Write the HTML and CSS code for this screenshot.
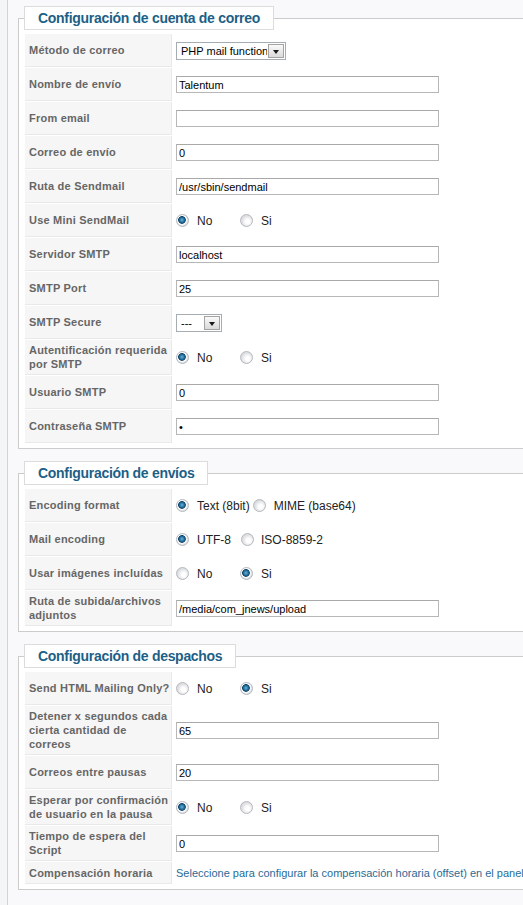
FILE: index.html
```html
<!DOCTYPE html>
<html lang="es">
<head>
    <meta charset="UTF-8">
    <meta name="viewport" content="width=device-width, initial-scale=1.0">
    <title>Configuración de correo</title>
    <link rel="stylesheet" href="styles.css">
</head>
<body>
    <div class="element-box">

        <!-- Cuenta de correo -->
        <fieldset class="adminform">
            <legend>Configuración de cuenta de correo</legend>
            <table class="admintable">
                <tr>
                    <td class="key">Método de correo</td>
                    <td>
                        <span class="select">
                            <select class="select-php"><option>PHP mail function</option></select>
                            <span class="select-btn"></span>
                        </span>
                    </td>
                </tr>
                <tr>
                    <td class="key">Nombre de envío</td>
                    <td><input class="inputbox" type="text" value="Talentum"></td>
                </tr>
                <tr>
                    <td class="key">From email</td>
                    <td><input class="inputbox" type="text" value=""></td>
                </tr>
                <tr>
                    <td class="key">Correo de envío</td>
                    <td><input class="inputbox" type="text" value="0"></td>
                </tr>
                <tr>
                    <td class="key">Ruta de Sendmail</td>
                    <td><input class="inputbox" type="text" value="/usr/sbin/sendmail"></td>
                </tr>
                <tr>
                    <td class="key">Use Mini SendMail</td>
                    <td>
                        <div class="radios">
                            <label class="opt opt-no"><input type="radio" name="minisend" checked> No</label>
                            <label class="opt"><input type="radio" name="minisend"> Si</label>
                        </div>
                    </td>
                </tr>
                <tr>
                    <td class="key">Servidor SMTP</td>
                    <td><input class="inputbox" type="text" value="localhost"></td>
                </tr>
                <tr>
                    <td class="key">SMTP Port</td>
                    <td><input class="inputbox" type="text" value="25"></td>
                </tr>
                <tr>
                    <td class="key">SMTP Secure</td>
                    <td>
                        <span class="select">
                            <select class="select-secure"><option>---</option></select>
                            <span class="select-btn"></span>
                        </span>
                    </td>
                </tr>
                <tr>
                    <td class="key">Autentificación requerida por SMTP</td>
                    <td>
                        <div class="radios">
                            <label class="opt opt-no"><input type="radio" name="smtpauth" checked> No</label>
                            <label class="opt"><input type="radio" name="smtpauth"> Si</label>
                        </div>
                    </td>
                </tr>
                <tr>
                    <td class="key">Usuario SMTP</td>
                    <td><input class="inputbox" type="text" value="0"></td>
                </tr>
                <tr>
                    <td class="key">Contraseña SMTP</td>
                    <td><input class="inputbox" type="password" value="x"></td>
                </tr>
            </table>
        </fieldset>

        <!-- Envíos -->
        <fieldset class="adminform">
            <legend>Configuración de envíos</legend>
            <table class="admintable">
                <tr>
                    <td class="key">Encoding format</td>
                    <td>
                        <div class="radios">
                            <label class="opt opt-tight"><input type="radio" name="encformat" checked> Text (8bit)</label>
                            <label class="opt"><input type="radio" name="encformat"> MIME (base64)</label>
                        </div>
                    </td>
                </tr>
                <tr>
                    <td class="key">Mail encoding</td>
                    <td>
                        <div class="radios">
                            <label class="opt opt-utf"><input type="radio" name="mailenc" checked> UTF-8</label>
                            <label class="opt opt-iso"><input type="radio" name="mailenc"> ISO-8859-2</label>
                        </div>
                    </td>
                </tr>
                <tr>
                    <td class="key">Usar imágenes incluídas</td>
                    <td>
                        <div class="radios">
                            <label class="opt opt-no"><input type="radio" name="embed"> No</label>
                            <label class="opt"><input type="radio" name="embed" checked> Si</label>
                        </div>
                    </td>
                </tr>
                <tr>
                    <td class="key">Ruta de subida/archivos adjuntos</td>
                    <td><input class="inputbox" type="text" value="/media/com_jnews/upload"></td>
                </tr>
            </table>
        </fieldset>

        <!-- Despachos -->
        <fieldset class="adminform">
            <legend>Configuración de despachos</legend>
            <table class="admintable">
                <tr>
                    <td class="key">Send HTML Mailing Only?</td>
                    <td>
                        <div class="radios">
                            <label class="opt opt-no"><input type="radio" name="htmlonly"> No</label>
                            <label class="opt"><input type="radio" name="htmlonly" checked> Si</label>
                        </div>
                    </td>
                </tr>
                <tr>
                    <td class="key">Detener x segundos cada cierta cantidad de correos</td>
                    <td><input class="inputbox" type="text" value="65"></td>
                </tr>
                <tr>
                    <td class="key">Correos entre pausas</td>
                    <td><input class="inputbox" type="text" value="20"></td>
                </tr>
                <tr>
                    <td class="key">Esperar por confirmación de usuario en la pausa</td>
                    <td>
                        <div class="radios">
                            <label class="opt opt-no"><input type="radio" name="confirm" checked> No</label>
                            <label class="opt"><input type="radio" name="confirm"> Si</label>
                        </div>
                    </td>
                </tr>
                <tr>
                    <td class="key">Tiempo de espera del Script</td>
                    <td><input class="inputbox" type="text" value="0"></td>
                </tr>
                <tr>
                    <td class="key">Compensación horaria</td>
                    <td class="note"><a href="#">Seleccione para configurar la compensación horaria (offset) en el panel de configuración global</a></td>
                </tr>
            </table>
        </fieldset>

    </div>
</body>
</html>
```

FILE: styles.css
```css
body {
    margin: 0;
    font-family: 'Liberation Sans', Arial, sans-serif;
    font-size: 11px;
    background-color: #f4f5f7;
    color: #333;
    overflow: hidden;
}

.element-box {
    width: 640px;
    margin-left: 7px;
    padding: 6px 10px 12px 10px;
    background-color: #f9f9fb;
    border-left: 1px solid #d2d4d8;
    border-bottom: 1px solid #d2d4d8;
    border-bottom-left-radius: 6px;
}

fieldset.adminform {
    margin: 0 0 12px 0;
    padding: 3px 6px 4px 5px;
    border: 1px solid #cccccc;
    background-color: #ffffff;
}

fieldset.adminform legend {
    margin: 0;
    padding: 3px 13px 2px 13px;
    border: 1px solid #dcdcdc;
    background-color: #ffffff;
    color: #1d5f86;
    font-size: 14px;
    line-height: 17px;
    font-weight: bold;
    letter-spacing: -0.3px;
}

.admintable {
    border-collapse: separate;
    border-spacing: 1px;
}

.admintable td {
    padding: 4px 4px 4px 3px;
    vertical-align: middle;
    white-space: nowrap;
}

.admintable td.key {
    width: 142px;
    padding: 3px 0 3px 4px;
    background-color: #f6f6f6;
    border-bottom: 1px solid #e9e9e9;
    border-right: 1px solid #e9e9e9;
    color: #666666;
    font-weight: bold;
    line-height: 14px;
    letter-spacing: 0.22px;
    white-space: normal;
}

.inputbox {
    display: block;
    box-sizing: border-box;
    width: 263px;
    height: 17px;
    margin: 4px 0;
    padding: 0 2px;
    border: 1px solid #b7b7b7;
    border-top-color: #a9a9a9;
    background: #ffffff;
    font-family: 'Liberation Sans', Arial, sans-serif;
    font-size: 11px;
    color: #000;
    outline: none;
}

/* select with XP style button */
.select {
    position: relative;
    display: inline-block;
    margin: 4px 0 3px 0;
    vertical-align: middle;
}

.select select {
    display: block;
    box-sizing: border-box;
    height: 18px;
    margin: 0;
    padding: 0 18px 0 4px;
    border: 1px solid #a5acb2;
    background: #ffffff;
    font-family: 'Liberation Sans', Arial, sans-serif;
    font-size: 11px;
    color: #000;
    appearance: none;
    -webkit-appearance: none;
}

.select-php {
    width: 110px;
}

.select-secure {
    width: 46px;
}

.select-btn {
    position: absolute;
    top: 2px;
    right: 2px;
    width: 16px;
    height: 14px;
    box-sizing: border-box;
    border: 1px solid #a3a3a3;
    background: linear-gradient(#fafafa, #dadada);
}

.select-btn::after {
    content: "";
    position: absolute;
    left: 4px;
    top: 5px;
    border-left: 3.5px solid transparent;
    border-right: 3.5px solid transparent;
    border-top: 4px solid #1a1a1a;
}

/* radio groups */
.radios {
    display: flex;
    align-items: center;
    height: 25px;
    font-size: 12px;
    color: #222;
}

.opt {
    display: inline-flex;
    align-items: center;
    gap: 8px;
}

.opt-no {
    width: 64px;
}

.opt-tight {
    margin-right: 3px;
}

.opt-utf {
    width: 65px;
}

.opt-iso {
    gap: 7px;
}

.opt input {
    appearance: none;
    -webkit-appearance: none;
    width: 13px;
    height: 13px;
    margin: 0;
    border: 1px solid #b4b9be;
    border-radius: 50%;
    background: radial-gradient(circle at 60% 60%, #ffffff 0, #ffffff 2px, #dcdde0 6px);
    box-sizing: border-box;
}

.opt input:checked {
    background: radial-gradient(circle at 45% 45%, #6cb3dc 0, #1f6a98 2.5px, #14486d 3.5px, #ffffff 4.2px, #dcdde0 6px);
}

.note {
    line-height: 14px;
}

.note a {
    color: #2a6a96;
    text-decoration: none;
}
```
